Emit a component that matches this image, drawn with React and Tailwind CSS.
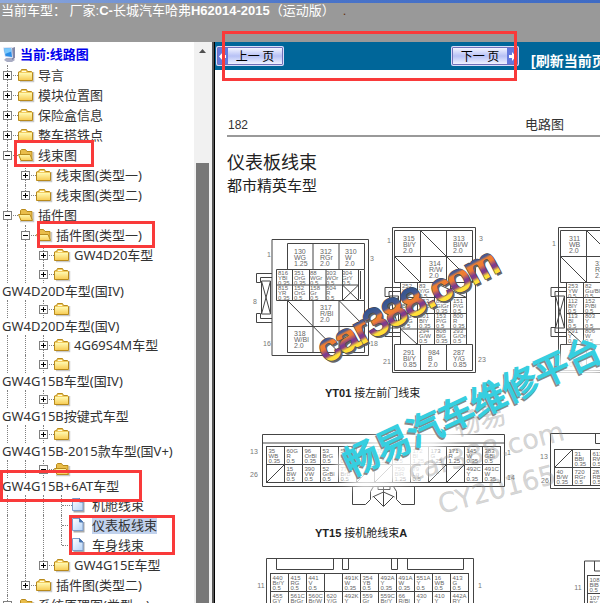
import React from "react";
import clsx from "clsx";

const treeRows = [
  { guides: "", toggle: "+", icon: "folder", label: "导言" },
  { guides: "", toggle: "+", icon: "folder", label: "模块位置图" },
  { guides: "", toggle: "+", icon: "folder", label: "保险盒信息" },
  { guides: "", toggle: "+", icon: "folder", label: "整车搭铁点" },
  { guides: "", toggle: "-", icon: "open", label: "线束图" },
  { guides: "|", toggle: "+", icon: "folder", label: "线束图(类型一)" },
  { guides: "|", toggle: "+", icon: "folder", label: "线束图(类型二)", last: true },
  { guides: "", toggle: "-", icon: "open", label: "插件图" },
  { guides: "|", toggle: "-", icon: "open", label: "插件图(类型一)" },
  { guides: "||", toggle: "+", icon: "folder", label: "GW4D20车型" },
  { guides: "||", toggle: "+", icon: "folder", label: "GW4D20D车型(国IV)", wrap: true },
  { guides: "||", toggle: "+", icon: "folder", label: "GW4D20D车型(国V)", wrap: true },
  { guides: "||", toggle: "+", icon: "folder", label: "4G69S4M车型" },
  { guides: "||", toggle: "+", icon: "folder", label: "GW4G15B车型(国IV)", wrap: true },
  { guides: "||", toggle: "+", icon: "folder", label: "GW4G15B按键式车型", wrap: true },
  { guides: "||", toggle: "+", icon: "folder", label: "GW4G15B-2015款车型(国V+)", wrap: true },
  { guides: "||", toggle: "-", icon: "open", label: "GW4G15B+6AT车型", wrap: true },
  { guides: "|||", icon: "page", label: "机舱线束" },
  { guides: "|||", icon: "page", label: "仪表板线束", selected: true },
  { guides: "|||", icon: "page", label: "车身线束", last: true },
  { guides: "||", toggle: "+", icon: "folder", label: "GW4G15E车型", last: true },
  { guides: "|", toggle: "+", icon: "folder", label: "插件图(类型二)", last: true },
  { guides: "", toggle: "-", icon: "open", label: "系统原理图(类型一)" },
];

export default function App() {
  return (
    <div className="flex h-screen flex-col overflow-hidden bg-white font-['Noto_Sans','Noto_Sans_CJK_SC',sans-serif]">
      <header className="h-[42px] shrink-0 bg-[#999999]">
        <div className="h-[3px] bg-gradient-to-r from-[#8fa9dc] via-[#4a74c9] to-[#3f6bc4]" />
        <p className="flex whitespace-pre pl-px font-['Liberation_Sans','Noto_Sans_CJK_SC',sans-serif] text-[13px] leading-4 text-white">
          <span>当前车型： 厂家:</span>
          <b>C-</b>
          <span>长城汽车哈弗</span>
          <b>H62014-2015</b>
          <span>（运动版）</span>
          <span className="ml-2 text-[#663311]">.</span>
        </p>
      </header>

      <div className="flex min-h-0 flex-1">
        <aside className="relative flex w-[212px] shrink-0 overflow-hidden">
          <nav className="min-w-0 flex-1 overflow-hidden text-[13px] text-[#333333]" aria-label="线路图">
            <a href="#tree" className="flex h-[23px] items-center gap-1 pl-0.5 font-bold text-[#0000ee]">
              <ComputerIcon />
              <span className="whitespace-nowrap leading-5">当前:线路图</span>
            </a>
            <ul>
              {treeRows.map((row) => (
                <TreeRow key={row.label} {...row} />
              ))}
            </ul>
          </nav>
          <Scrollbar />
          <Mark className="left-[14px] top-[98px] h-[27px] w-[80px]" />
          <Mark className="left-[37px] top-[179px] h-[27px] w-[118px]" />
          <Mark className="left-0 top-[428px] h-[32px] w-[142px]" />
          <Mark className="left-[69px] top-[473px] h-[40px] w-[106px]" />
        </aside>
        <div className="w-[3px] shrink-0 border-r border-black bg-[#555555]" />

        <main className="relative min-w-0 flex-1">
          <div className="flex h-7 items-center overflow-hidden bg-[#006699] pl-px">
            <PageButton side="left">上一 页</PageButton>
            <PageButton side="right" className="ml-[167px]">下一 页</PageButton>
            <a
              href="#refresh"
              className="ml-3 whitespace-nowrap pt-2.5 font-['Liberation_Sans','Noto_Sans_CJK_SC',sans-serif] text-[14px] font-bold leading-4 text-white"
            >
              [刷新当前页]
            </a>
          </div>

          <div className="overflow-hidden">
            <div className="ml-3 flex justify-between border-b-2 border-[#999999] pl-px pr-9 pt-[45px] font-['Liberation_Sans','Noto_Sans_CJK_SC',sans-serif] text-[13px] leading-5 text-[#333333]">
              <span className="text-[12px]">182</span>
              <span>电路图</span>
            </div>
            <h1 className="mt-3 pl-3 font-['Noto_Sans_CJK_SC',sans-serif] text-[18px] leading-6 text-[#222222]">
              仪表板线束
            </h1>
            <h2 className="pb-0.5 pl-3 font-['Noto_Sans_CJK_SC',sans-serif] text-[15px] leading-6 text-[#222222]">
              都市精英车型
            </h2>
            <WiringSheet />
          </div>

          <Mark className="-top-[11px] left-[7px] h-[50px] w-[295px]" />
        </main>
      </div>
    </div>
  );
}

function TreeRow({ guides, toggle, icon, label, wrap, last, selected }) {
  const text = (
    <a href="#sheet" className={clsx("whitespace-nowrap leading-[17px]", selected && "bg-[#c1d2ee]")}>
      {label}
    </a>
  );

  return (
    <li>
      <div className={clsx("flex items-center", wrap ? "h-[18px]" : "h-5")}>
        {guides.split("").map((_, i) => (
          <span key={i} className="h-full w-[18px] shrink-0 pl-[7px]">
            <span className="block h-full border-l border-dotted border-[#808080]" />
          </span>
        ))}
        <span className="relative flex h-full w-[18px] shrink-0 items-center pl-[7px]">
          <span
            className={clsx(
              "w-px self-start border-l border-dotted border-[#808080]",
              last ? "h-1/2" : "h-full"
            )}
          />
          <span className="h-px flex-1 border-t border-dotted border-[#808080]" />
          {toggle && (
            <button
              type="button"
              aria-label={label}
              className="absolute left-[3px] grid size-[9px] place-items-center border border-[#808080] bg-white"
            >
              <svg width="5" height="5" viewBox="0 0 5 5" shapeRendering="crispEdges">
                <path d={toggle === "+" ? "M0 2h5v1H0zM2 0h1v5H2z" : "M0 2h5v1H0z"} />
              </svg>
            </button>
          )}
        </span>
        {icon === "page" ? <PageIcon /> : <FolderIcon open={icon === "open"} />}
        {!wrap && <span className="flex pl-0.5">{text}</span>}
      </div>
      {wrap && <div className="flex h-[17px] items-center pl-0.5">{text}</div>}
    </li>
  );
}

function Scrollbar() {
  return (
    <div className="flex w-[18px] shrink-0 flex-col items-center bg-[#f1f1f1] pr-px pt-[7px]">
      <svg width="7" height="4" viewBox="0 0 7 4">
        <path d="M0 4 3.5 0 7 4z" fill="#505050" />
      </svg>
      <div className="mt-[110px] w-[13px] flex-1 bg-[#787878]" />
    </div>
  );
}

function Mark({ className }) {
  return <div className={clsx("pointer-events-none absolute border-[3px] border-[#f93a3a]", className)} />;
}

function PageButton({ side, className, children }) {
  const arrow = (
    <span className="grid h-full w-[10px] place-items-center bg-[#6479dd]">
      <svg width="8" height="9" viewBox="0 0 8 9">
        <path d={side === "left" ? "M0 4.5 4 0v3h3v3H4v3z" : "M8 4.5 4 0v3H1v3h3v3z"} fill="#fff" />
      </svg>
    </span>
  );

  return (
    <button
      type="button"
      className={clsx(
        "flex h-5 w-[68px] shrink-0 items-center rounded-[2px] border-2 border-[#d9dcfa] bg-gradient-to-b from-[#f4f5ff] via-[#b7c1f5] to-[#f0f2ff] font-['Noto_Sans_CJK_SC',sans-serif] text-[12px] leading-4 text-black outline outline-1 -outline-offset-2 outline-[#7171b8]",
        className
      )}
    >
      {side === "left" && arrow}
      <span className="flex-1 whitespace-nowrap">{children}</span>
      {side === "right" && arrow}
    </button>
  );
}

function ComputerIcon() {
  return (
    <svg width="14" height="16" viewBox="0 0 14 16" className="shrink-0">
      <path d="M4 12h7l2 2-3 2H5l-3-2z" fill="#a9adc4" />
      <path d="M10 2l3-1v11l-3 2z" fill="#8288a8" />
      <path d="M1 1.5 10 1l1 11-8-1z" fill="#d5dcf0" />
      <path d="M2 2.5 9 2l1 9-6.500-1z" fill="#2a8ee8" />
      <path d="M2 2.500 9 2l.4 3.500L3 8z" fill="#7cc9fb" />
    </svg>
  );
}

function FolderIcon({ open }) {
  return (
    <svg width="18" height="16" viewBox="0 0 18 16" className="shrink-0">
      <defs>
        <linearGradient id="folder" x1="0" y1="0" x2="0" y2="1">
          <stop offset="0" stopColor="#fff9b0" />
          <stop offset="1" stopColor="#f8cd57" />
        </linearGradient>
      </defs>
      <path d="M2 14.500h13.500V5" fill="none" stroke="#c9c9c9" strokeWidth="1.500" />
      {open ? (
        <>
          <path d="M2.500 13V3.500l1-1h4l1.500 2h5v8.500z" fill="#e9bd4a" stroke="#b88a1c" />
          <path d="M.5 7.500h11.500l2.500 6H3z" fill="url(#folder)" stroke="#b88a1c" />
        </>
      ) : (
        <>
          <path d="M.5 13.500V5l1-.5h1l1-2h5l1 2h4l1 1v8z" fill="#f3ce62" stroke="#b88a1c" />
          <path d="M1 6h13v7H1z" fill="url(#folder)" />
          <path d="M4 4.500h4" stroke="#fffbe0" />
        </>
      )}
    </svg>
  );
}

function PageIcon() {
  return (
    <svg width="18" height="16" viewBox="0 0 18 16" className="shrink-0">
      <defs>
        <linearGradient id="page" x1="0" y1="0" x2="1" y2="1">
          <stop offset="0" stopColor="#ffffff" />
          <stop offset="1" stopColor="#b5d4f8" />
        </linearGradient>
      </defs>
      <path d="M1.500 14.500h10V5" fill="none" stroke="#aaaaaa" strokeWidth="2" />
      <path d="M.5 1.500h7l3.500 3.500v8.500H.5z" fill="url(#page)" stroke="#7c9ccb" />
      <path d="M7.500 1.500V5H11z" fill="#3f6fae" stroke="#4f78b0" />
    </svg>
  );
}

// One terminal: wire number, colour code and cross-section stacked in a cell
function Pin({ x, y, lines, small }) {
  const step = small ? 5 : 6;
  return (
    <text x={x} y={y} fontSize={small ? 6 : 7} fill="#666">
      {lines.split(" ").map((line, i) => (
        <tspan key={i} x={x} y={y + i * step}>{line}</tspan>
      ))}
    </text>
  );
}

function Labels({ items }) {
  return items.map(([x, y, text]) => (
    <text key={`${x}-${y}`} x={x} y={y} fontSize="7" textAnchor="middle" fill="#777">{text}</text>
  ));
}

function DoorPlug() {
  const small = [
    ["816 YBl 0.35", "351 OrG 0.35", "88 WGr 0.5", "303 WOr 0.5", "304 GrY 0.5"],
    ["815 YR 0.35", "152 OrG 0.5", "158 Gr 0.5", "504 R 0.5"],
  ];
  return (
    <g>
      <path d="M272 239.500h96.500v116H272zM287.500 269.500v-26h77v26M287.500 300.500v52h77v-52M313 243.500v26M339 243.500v26M313 300.500v52M339 300.500v52M287.500 326.500h77" />
      <path d="M276.500 269.500h88v31h-88zM276.500 285h82M292.500 269.500v31M309.500 269.500v31M326 269.500v31M342.500 269.500v31M358.500 269.500v31M360.500 271v28" />
      <path d="M342.500 285l16 15.500M358.500 285l-16 15.500M287.500 300.500l51.500 52M339 300.500l25.500 26" />
      <path d="M272 273.500h-15.500v9h4v-5H272M272 322.500h-15.500v-9h4v5H272M261.500 281h9v33h-9zM261.500 281l9 33M270.500 281l-9 33" />
      <g stroke="none">
        <Pin x={294} y={254} lines="130 WG 1.25" />
        <Pin x={320} y={254} lines="312 RGr 2.0" />
        <Pin x={345} y={254} lines="310 W 2.0" />
        <Pin x={320} y={310} lines="317 R/Bl 2.0" />
        <Pin x={294} y={336} lines="318 W/Bl 2.0" />
        {small.map((row, r) =>
          row.map((lines, c) => (
            <Pin key={lines} small x={278 + c * 16} y={275 + r * 15} lines={lines} />
          ))
        )}
        <Labels items={[[269, 257, "1"], [372, 261, "3"], [255, 304, "8"], [267, 346, "16"], [374, 346, "18"]]} />
      </g>
    </g>
  );
}

function TallPlug({ dx, top, rows, bottom, labels }) {
  return (
    <g transform={`translate(${dx} 0)`}>
      <path d="M392.500 227.500h83v145h-83zM394.500 230.500h78v52h-78zM394.500 256.500h78M420.500 230.500v52M446.500 230.500v52M394.500 344.500h78v26h-78zM420.500 344.500v26M446.500 344.500v26" />
      <path d="M400.500 282.500h66v62h-66zM417.500 282.500v62M434.500 282.500v62M450.500 282.500v62M400.500 297.500h66M400.500 313.500h66M400.500 329h66" />
      <path d="M420.500 230.500l26 26M446.500 256.500l26 26M394.500 256.500l26 26M400.500 329l17 15.500M434.500 282.500l32 15" />
      <path d="M400 287.500h-15v9h4v-5h11M400 336.500h-15v-9h4v5h11M389.500 296h9v32h-9zM389.500 296l9 32M398.500 296l-9 32" />
      <g stroke="none">
        <Pin x={403} y={241} lines={top[0]} />
        <Pin x={453} y={241} lines={top[1]} />
        <Pin x={429} y={266} lines={top[2]} />
        {rows.map((row, r) =>
          row.map((lines, c) => (
            <Pin key={`${r}-${c}`} small x={402 + c * 17} y={288 + r * 15} lines={lines} />
          ))
        )}
        {bottom.map((lines, c) => (
          <Pin key={lines} x={403 + c * 25} y={355} lines={lines} />
        ))}
        <Labels items={labels} />
      </g>
    </g>
  );
}

// Two-row housing with 18px wide terminals; "/" marks an unused terminal
function FlatRows({ x, y, rows }) {
  return (
    <g>
      <rect x={x} y={y} width={rows[0].length * 18} height="36" />
      <path d={`M${x} ${y + 18}h${rows[0].length * 18}`} />
      {rows.map((row, r) =>
        row.map((lines, c) => {
          const left = x + c * 18;
          const topY = y + r * 18;
          return (
            <g key={`${r}-${c}`}>
              <path d={`M${left} ${topY}v18`} />
              {lines === "/" ? (
                <path d={`M${left} ${topY + 18}l18 -18`} />
              ) : (
                <g stroke="none">
                  <Pin small x={left + 2} y={topY + 6} lines={lines} />
                </g>
              )}
            </g>
          );
        })
      )}
    </g>
  );
}

function WiringSheet() {
  return (
    <svg
      width="385"
      height="404"
      viewBox="215 199 385 404"
      className="block font-['Liberation_Sans','Noto_Sans_CJK_SC',sans-serif]"
    >
      <defs>
        <linearGradient id="rainbow" x1="0" y1="0" x2="0" y2="1">
          <stop offset="0.180" stopColor="#33558f" />
          <stop offset="0.340" stopColor="#4a5a90" />
          <stop offset="0.400" stopColor="#f08030" />
          <stop offset="0.500" stopColor="#ee7c34" />
          <stop offset="0.620" stopColor="#7a3a94" />
          <stop offset="0.680" stopColor="#8a4080" />
          <stop offset="0.760" stopColor="#ffe038" />
          <stop offset="1" stopColor="#ffe038" />
        </linearGradient>
        <filter id="haze" x="-20%" y="-60%" width="140%" height="220%">
          <feGaussianBlur stdDeviation="5" />
        </filter>
      </defs>

      <g fill="none" stroke="#444" strokeWidth="1">
        <DoorPlug />
        <TallPlug
          dx={0}
          top={["315 Bl/Y 2.0", "313 Bl/W 2.0", "314 R/W 2.0"]}
          rows={[
            ["252 YW 0.5", "83 Y/G 0.5"],
            ["112 BlY 0.5", "153 GrBl 0.5", "806 GlGr 0.35", "151 P/G 0.5"],
            ["113 BrG 0.5", "801 BlY 0.35", "153 P/G 0.5", "800 R 0.35"],
            ["", "294 G/W 0.5", "808 BlG 0.35", "293 G/Or 0.5"],
          ]}
          bottom={["291 Bl/Y 0.85", "984 B 2.0", "287 Y/G 0.85"]}
          labels={[[389, 243, "1"], [481, 241, "3"], [387, 364, "21"], [482, 362, "23"]]}
        />
        <TallPlug
          dx={166}
          top={["311 WB 2.0", "", "316 R/Y 2.0"]}
          rows={[
            ["253 YW 0.5", "82 Gu/Bl 0.5"],
            ["112 BlY 0.5", "152 P/Bl 0.5"],
            ["113 Bl 0.5", "803 Y 0.5"],
            ["291 Y 0.5", "806 W 0.5"],
          ]}
          bottom={["290 Bl 0.85"]}
          labels={[[388, 246, "1"]]}
        />

        <path d="M262.500 434.500h242v52h-242zM262.500 443h242" />
        <FlatRows
          x={266.5}
          y={446.5}
          rows={[
            ["35 WB 0.35", "60G R 0.5", "96 OrBl 0.35", "53 BrG 0.5", "54 Br 0.5", "77 G 0.5", "78 W 0.5", "750 W 0.5", "172 Bl 1.25", "173 G 1.25", "171 R 1.25", "145 W 0.35", "383 GBl 0.5"],
            ["/", "15 BW 0.5", "390 VW 0.5", "52 GrBl 0.5", "771 BrB 0.5", "/", "/", "750 BlR 1.25", "79 Lg 0.5", "/", "/", "492C Y 0.35", "491C W 0.35"],
          ]}
        />
        <path d="M352.500 486.500v18h13l5-5v-8l3-5M414.500 486.500v18h-13l-5-5v-8l-3-5M378 486.500v3h12v-3M383.500 487v19M383.500 492l-11 5M383.500 492l11 5M374 497l9.500 9.500 9.500-9.500" />

        <path d="M610 433.500h-59.500v55H610M595.500 433.500v10H610" />
        <FlatRows
          x={554.5}
          y={449.5}
          rows={[
            ["/", "31 BBl 0.35", "611 RW 0.5"],
            ["40 B/W 0.35", "720 RGr 0.5", "281 RB 0.5"],
          ]}
        />

        <path d="M266.500 610v-51.500h207V610M276.500 558.500v11h57v-11M342.500 558.500v11h6v-11M391.500 558.500v11h6v-11M407.500 558.500v11h56v-11" />
        <FlatRows
          x={270.5}
          y={573.5}
          rows={[
            ["440 Br/Y 0.5", "415 RG 0.5", "441 V 0.5", "", "491K W 0.35", "354 YB 0.5", "492A Y 0.35", "491A W 0.35", "551A Y 0.5", "16 WB 0.5", "413 G 0.5"],
            ["455 GY 0.5", "561C BrGr 0.5", "560C Br/W 0.5", "620 Y/G 0.5", "492K Y 0.5", "559 Gr 0.5", "559C Br/Y 0.5", "66 R/Bl 0.5", "430 Y 0.5", "410 Y 0.5", "442A RY 0.5"],
          ]}
        />
        <path d="M584.500 610v-49H610M594.500 561v10H610" />
        <FlatRows x={587.5} y={575.5} rows={[["108 BlB 0.5"], ["107 BY 0.5"]]} />
      </g>

      <Labels
        items={[
          [254, 454, "13"], [254, 477, "26"], [509, 455, "1"], [511, 480, "14"],
          [544, 459, "13"], [545, 483, "26"], [261, 588, "11"], [480, 588, "1"], [578, 590, "11"],
        ]}
      />

      <g fill="#222" fontSize="11">
        <text x="325" y="397"><tspan fontWeight="bold">YT01</tspan> 接左前门线束</text>
        <text x="315" y="537"><tspan fontWeight="bold">YT15</tspan> 接机舱线束<tspan fontWeight="bold">A</tspan></text>
      </g>

      <g stroke="#fff" strokeLinecap="round" filter="url(#haze)" opacity="0.800">
        <path d="M354 466 600 356" strokeWidth="36" />
        <path d="M365 476 425 462" strokeWidth="30" />
      </g>

      <g fill="#888" fillOpacity="0.350" stroke="#888" strokeOpacity="0.200" strokeWidth="0.500" className="font-['DejaVu_Sans','Noto_Sans_CJK_SC',sans-serif]">
        <text transform="translate(456 436) rotate(-15)" fontSize="27">畅易</text>
        <text transform="translate(411 481) rotate(-15)" fontSize="27">car388.com</text>
        <text transform="translate(441 514) rotate(-15)" fontSize="27">CY20165</text>
      </g>

      <g className="font-['Noto_Sans_CJK_SC',sans-serif]" fontSize="35" strokeWidth="1.500">
        <text transform="translate(350 479) rotate(-25)" fill="#888" stroke="#888">畅易汽车维修平台</text>
        <text transform="translate(351 477) rotate(-25)" fill="#36cfe0" stroke="#36cfe0">畅易汽车维修平台</text>
      </g>

      <g fontSize="38">
        <text transform="translate(328 365) rotate(-28)" fill="#555" stroke="#666" strokeWidth="2">
          car388.com
        </text>
        <text transform="translate(326 363) rotate(-28)" fill="#444" stroke="#444" strokeWidth="3">
          car388.com
        </text>
        <text transform="translate(326 363) rotate(-28)" fill="url(#rainbow)" stroke="url(#rainbow)" strokeWidth="2">
          car388.com
        </text>
      </g>
    </svg>
  );
}
